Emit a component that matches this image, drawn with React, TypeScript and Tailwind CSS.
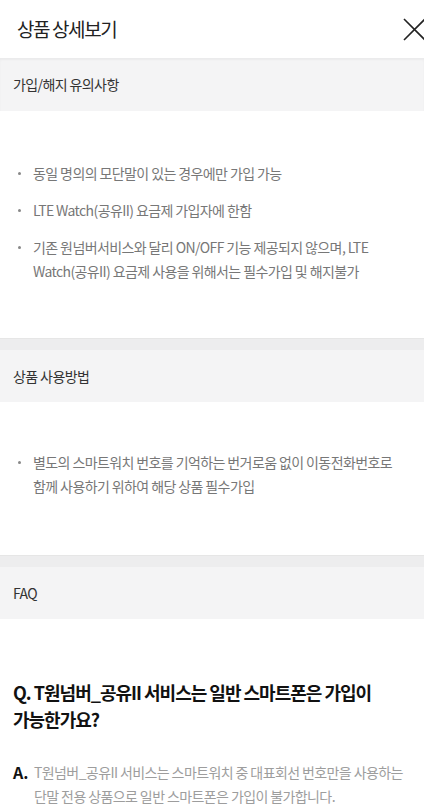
import React from "react";

const FONT = { fontFamily: '"Noto Sans CJK KR", "Noto Sans", sans-serif' };

function SectionHeader({ title, first }: { title: string; first?: boolean }) {
  return (
    <div>
      {!first && <div className="h-[12px] border-t border-[#e6e6e6] bg-[#ededee]" />}
      <div
        className={
          "flex items-center bg-[#f4f4f5] px-[13px] text-[14px] tracking-[-0.6px] text-[#333]" +
          (first ? " h-[53px] shadow-[inset_0_2px_2px_rgba(0,0,0,0.04)]" : " h-[52px]")
        }
      >
        {title}
      </div>
    </div>
  );
}

function Bullets({ items }: { items: string[] }) {
  return (
    <ul className="flex flex-col gap-[13px] pl-[18px] pr-[16px]">
      {items.map((t) => (
        <li key={t} className="flex break-keep text-[14px] leading-[24px] tracking-[-0.6px] text-[#777]">
          <span className="mt-[11px] mr-[12px] h-[3px] w-[3px] shrink-0 rounded-full bg-[#888]" />
          <span>{t}</span>
        </li>
      ))}
    </ul>
  );
}

export default function App() {
  return (
    <div className="min-h-[811px] w-[424px] overflow-hidden bg-white" style={FONT}>
      <header className="flex h-[58px] items-center justify-between pl-[17px]">
        <h1 className="text-[19px] font-normal tracking-[-1.4px] text-[#222]">상품 상세보기</h1>
        <button className="mr-[-2px] flex h-[24px] w-[24px] items-center justify-center" aria-label="닫기">
          <svg width="23" height="23" viewBox="0 0 23 23" fill="none" stroke="#222" strokeWidth="1.6">
            <path d="M1 1L22 22M22 1L1 22" />
          </svg>
        </button>
      </header>

      <SectionHeader title="가입/해지 유의사항" first />
      <div className="pt-[50px] pb-[55px]">
        <Bullets
          items={[
            "동일 명의의 모단말이 있는 경우에만 가입 가능",
            "LTE Watch(공유II) 요금제 가입자에 한함",
            "기존 원넘버서비스와 달리 ON/OFF 기능 제공되지 않으며, LTE Watch(공유II) 요금제 사용을 위해서는 필수가입 및 해지불가",
          ]}
        />
      </div>

      <SectionHeader title="상품 사용방법" />
      <div className="pt-[48px] pb-[57px]">
        <Bullets items={["별도의 스마트워치 번호를 기억하는 번거로움 없이 이동전화번호로 함께 사용하기 위하여 해당 상품 필수가입"]} />
      </div>

      <SectionHeader title="FAQ" />
      <div className="px-[13px] pt-[60px]">
        <p className="break-keep text-[18px] font-bold leading-[27px] tracking-[-1px] text-[#111]">
          Q. T원넘버_공유II 서비스는 일반 스마트폰은 가입이 가능한가요?
        </p>
        <div className="mt-[27px] flex">
          <span className="w-[21px] shrink-0 text-[16px] font-bold leading-[24px] text-[#111]">A.</span>
          <p className="break-keep text-[14px] leading-[24px] tracking-[-0.6px] text-[#9d9d9d]">
            T원넘버_공유II 서비스는 스마트워치 중 대표회선 번호만을 사용하는 단말 전용 상품으로 일반 스마트폰은 가입이 불가합니다.
          </p>
        </div>
      </div>
    </div>
  );
}
